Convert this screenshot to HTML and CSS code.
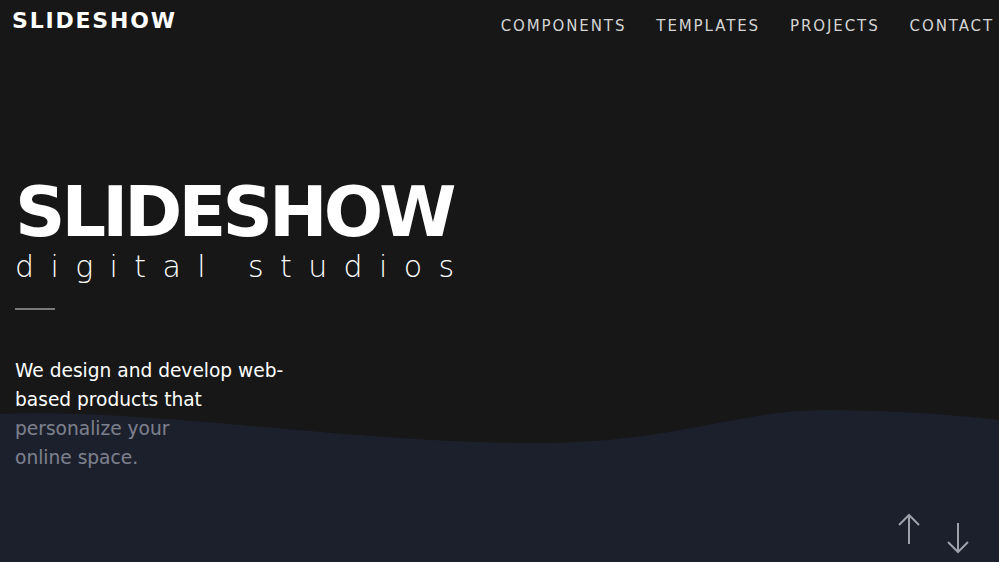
FILE: index.html
```html
<!DOCTYPE html>
<html lang="en">
<head>
<meta charset="utf-8">
<title>Slideshow</title>
<link rel="stylesheet" href="styles.css">
</head>
<body>
<div class="page">
  <header class="topbar">
    <div class="logo">SLIDESHOW</div>
    <nav class="nav">
      <a href="#">COMPONENTS</a>
      <a href="#">TEMPLATES</a>
      <a href="#">PROJECTS</a>
      <a href="#">CONTACT</a>
    </nav>
  </header>
  <main class="hero">
    <h1 class="title">SLIDESHOW</h1>
    <div class="subtitle">digital studios</div>
    <div class="rule"></div>
    <p class="lead">We design and develop web-based products that personalize your <span class="nowrap">online space.</span></p>
  </main>
  <svg class="wave" viewBox="0 0 999 162" preserveAspectRatio="none" aria-hidden="true">
    <path d="M0,14 C150,8 360,44 540,43 C680,42 740,9 830,10 C900,11 960,15 999,20 L999,162 L0,162 Z"/>
  </svg>
  <div class="arrows">
    <svg class="arrow up" viewBox="0 0 24 32" aria-hidden="true"><path d="M12,31 V2 M2,12 L12,2 L22,12"/></svg>
    <svg class="arrow down" viewBox="0 0 24 32" aria-hidden="true"><path d="M12,1 V30 M2,20 L12,30 L22,20"/></svg>
  </div>
</div>
</body>
</html>
```
FILE: styles.css
```css
html, body {
  margin: 0;
  padding: 0;
  background: #171717;
}
.page {
  position: relative;
  width: 999px;
  height: 562px;
  overflow: hidden;
  background: #171717;
  font-family: "DejaVu Sans", "Open Sans", sans-serif;
  color: #fff;
}
.topbar {
  display: flex;
  justify-content: space-between;
  align-items: flex-start;
  padding: 9px 5px 0 12px;
}
.logo {
  font-size: 22px;
  line-height: 24px;
  font-weight: 700;
  letter-spacing: 1.8px;
  color: #fff;
}
.nav {
  display: flex;
  gap: 30px;
  padding-top: 8px;
}
.nav a {
  color: #d4d4d4;
  text-decoration: none;
  font-size: 15px;
  line-height: 18px;
  letter-spacing: 1.9px;
}
.hero {
  padding: 142px 0 0 15px;
}
.title {
  margin: 0;
  font-size: 70px;
  line-height: 70px;
  font-weight: 700;
  letter-spacing: -3.9px;
  color: #fff;
}
.subtitle {
  margin-top: 2px;
  font-size: 30px;
  line-height: 36px;
  font-weight: 300;
  letter-spacing: 16.4px;
  color: #fff;
}
.rule {
  width: 40px;
  height: 2px;
  background: #7a7a7a;
  margin-top: 23px;
}
.lead {
  margin: 46px 0 0;
  width: 272px;
  font-size: 18.6px;
  line-height: 29px;
  color: #fff;
}
.nowrap {
  white-space: nowrap;
}
.wave {
  position: absolute;
  left: 0;
  top: 400px;
  width: 999px;
  height: 162px;
}
.wave path {
  fill: rgba(32, 38, 59, 0.59);
}
.arrows {
  position: absolute;
  left: 897px;
  top: 513px;
  display: flex;
  gap: 25px;
  align-items: flex-start;
}
.arrow {
  width: 24px;
  height: 32px;
}
.arrow path {
  fill: none;
  stroke: #9ea1a9;
  stroke-width: 2;
}
.arrow.down {
  margin-top: 9px;
}
```
